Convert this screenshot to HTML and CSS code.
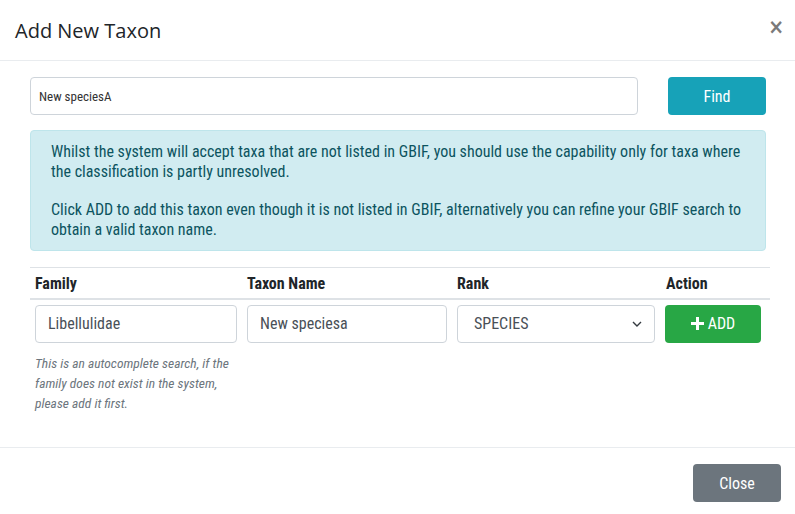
FILE: index.html
```html
<!DOCTYPE html>
<html>
<head>
<meta charset="utf-8">
<link rel="stylesheet" href="styles.css">
</head>
<body>
<div class="modal">
  <div class="modal-header">
    <h5 class="modal-title">Add New Taxon</h5>
    <span class="close">×</span>
  </div>
  <div class="modal-body">
    <div class="search-row">
      <input class="form-control search-input" type="text" value="New speciesA">
      <button class="btn btn-info find-btn">Find</button>
    </div>
    <div class="alert">
      <p>Whilst the system will accept taxa that are not listed in GBIF, you should use the capability only for taxa where the classification is partly unresolved.</p>
      <p>Click ADD to add this taxon even though it is not listed in GBIF, alternatively you can refine your GBIF search to obtain a valid taxon name.</p>
    </div>
    <table class="taxon-table">
      <thead>
        <tr>
          <th class="col-family">Family</th>
          <th class="col-name">Taxon Name</th>
          <th class="col-rank">Rank</th>
          <th class="col-action">Action</th>
        </tr>
      </thead>
      <tbody>
        <tr>
          <td>
            <input class="form-control" type="text" value="Libellulidae">
            <small class="help">This is an autocomplete search, if the family does not exist in the system, please add it first.</small>
          </td>
          <td><input class="form-control" type="text" value="New speciesa"></td>
          <td>
            <div class="select">
              <span>SPECIES</span>
              <svg width="10" height="6" viewBox="0 0 10 6"><path d="M1 1l4 4 4-4" fill="none" stroke="#343a40" stroke-width="1.4"/></svg>
            </div>
          </td>
          <td>
            <button class="btn btn-success add-btn"><svg width="13" height="13" viewBox="0 0 13 13"><path d="M5 0h3v5h5v3H8v5H5V8H0V5h5z" fill="#fff"/></svg>ADD</button>
          </td>
        </tr>
      </tbody>
    </table>
  </div>
  <div class="modal-footer">
    <button class="btn btn-secondary close-btn">Close</button>
  </div>
</div>
</body>
</html>
```

FILE: styles.css
```css
* { box-sizing: border-box; }
html, body { margin: 0; padding: 0; background: #fff; }
body {
  font-family: Roboto, "Liberation Sans", sans-serif;
  font-stretch: condensed;
  color: #212529;
  width: 795px;
  height: 514px;
  overflow: hidden;
}
.modal { width: 795px; }
.modal-header {
  height: 61px;
  border-bottom: 1px solid #e9ecef;
  display: flex;
  align-items: center;
  justify-content: space-between;
  padding: 0 11px 0 15px;
}
.modal-title {
  margin: 0;
  font-family: "Open Sans", sans-serif;
  font-stretch: normal;
  font-weight: 400;
  font-size: 20px;
  color: #212529;
  padding-top: 1px;
}
.close {
  font-family: "DejaVu Sans", sans-serif;
  font-weight: 700;
  font-size: 21px;
  color: #7a7a7a;
  margin-top: -6px;
}
.modal-body {
  padding: 16px 25px 0 30px;
  height: 386px;
}
.search-row {
  display: flex;
  gap: 30px;
  padding-right: 4px;
}
.form-control {
  height: 38px;
  border: 1px solid #ced4da;
  border-radius: 4px;
  padding: 0 12px;
  font-family: Roboto, sans-serif;
  font-stretch: condensed;
  font-size: 16px;
  color: #495057;
  background: #fff;
  width: 100%;
  display: block;
}
.search-input {
  flex: 1;
  font-size: 13px;
  padding: 0 8px;
  color: #333;
}
.btn {
  border: none;
  border-radius: 4px;
  color: #fff;
  font-family: Roboto, sans-serif;
  font-stretch: condensed;
  font-size: 16px;
  display: flex;
  align-items: center;
  justify-content: center;
}
.btn-info { background: #17a2b8; }
.btn-success { background: #28a745; }
.btn-secondary { background: #6c757d; }
.find-btn { width: 98px; height: 38px; }
.alert {
  margin-top: 15px;
  background: #d1ecf1;
  border: 1px solid #bee5eb;
  border-radius: 4px;
  color: #0c5460;
  padding: 11px 20px 10px 20px;
  font-size: 16px;
  line-height: 20px;
  width: 736px;
}
.alert p { margin: 0; }
.alert p + p { margin-top: 18px; }
.taxon-table {
  margin-top: 16px;
  border-collapse: collapse;
  width: 740px;
  table-layout: fixed;
}
.taxon-table th {
  text-align: left;
  font-weight: 700;
  font-size: 16px;
  padding: 5px 5px 4px 5px;
  border-top: 1px solid #dee2e6;
  border-bottom: 2px solid #dee2e6;
  height: 31px;
  color: #212529;
}
.col-family { width: 212px; }
.col-name { width: 210px; }
.col-rank { width: 209px; }
.col-action { width: 109px; }
.taxon-table td {
  vertical-align: top;
  padding: 5px 5px;
}
.help {
  display: block;
  margin-top: 10px;
  font-style: italic;
  font-size: 13.5px;
  line-height: 20px;
  color: #6c757d;
}
.select {
  height: 38px;
  border: 1px solid #ced4da;
  border-radius: 4px;
  padding: 0 12px 0 16px;
  display: flex;
  align-items: center;
  justify-content: space-between;
  font-size: 16px;
  color: #495057;
  width: 198px;
}
.add-btn {
  width: 96px;
  height: 38px;
  gap: 4px;
  margin-left: -1px;
}
.add-btn svg { margin-top: -1px; }
.modal-footer {
  border-top: 1px solid #e9ecef;
  display: flex;
  justify-content: flex-end;
  padding: 16px 14px 0 0;
}
.close-btn { width: 88px; height: 38px; }
```
